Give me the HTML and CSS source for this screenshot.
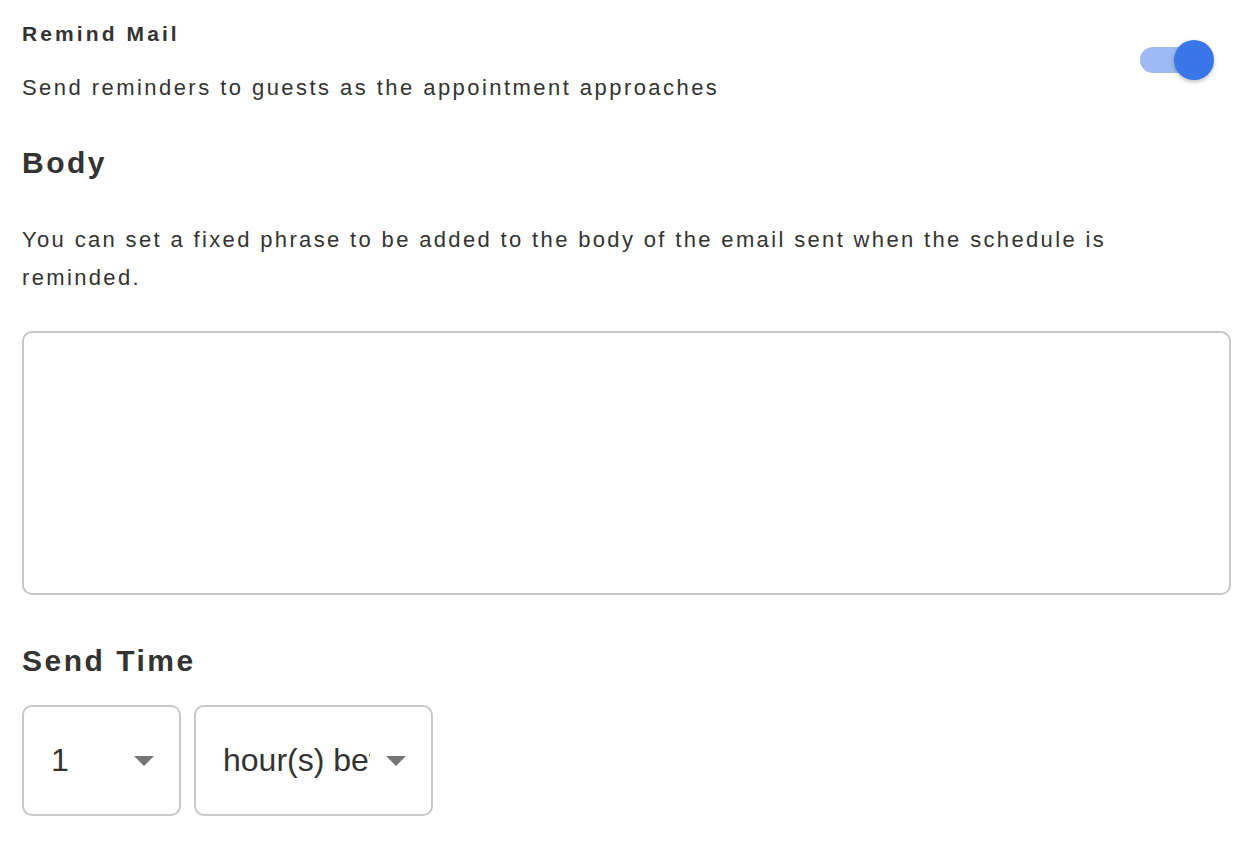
FILE: index.html
```html
<!DOCTYPE html>
<html>
<head>
<meta charset="utf-8">
<link rel="stylesheet" href="styles.css">
</head>
<body>
<div class="page">
  <div class="setting">
    <div class="setting-text">
      <div class="setting-title">Remind Mail</div>
      <div class="setting-desc">Send reminders to guests as the appointment approaches</div>
    </div>
    <div class="toggle">
      <div class="toggle-track"></div>
      <div class="toggle-thumb"></div>
    </div>
  </div>
  <h2 class="section-title">Body</h2>
  <p class="section-desc">You can set a fixed phrase to be added to the body of the email sent when the schedule is reminded.</p>
  <div class="textarea"></div>
  <h2 class="section-title send-title">Send Time</h2>
  <div class="selects">
    <div class="select select-num">
      <span class="select-value">1</span>
      <span class="caret"></span>
    </div>
    <div class="select select-unit">
      <span class="select-value">hour(s) before</span>
      <span class="caret"></span>
    </div>
  </div>
</div>
</body>
</html>
```
FILE: styles.css
```css
* { box-sizing: border-box; }
html, body { margin: 0; padding: 0; background: #fff; }
body {
  font-family: "Liberation Sans", Arial, sans-serif;
  color: #333;
}
.page {
  padding: 20px 29px 0 22px;
}
.setting {
  display: flex;
  justify-content: space-between;
  align-items: flex-start;
}
.setting-title {
  font-size: 21px;
  font-weight: bold;
  letter-spacing: 3.1px;
  line-height: 28px;
}
.setting-desc {
  margin-top: 26px;
  font-size: 22px;
  letter-spacing: 2.45px;
  line-height: 28px;
}
.toggle {
  position: relative;
  width: 75px;
  height: 40px;
  margin-top: 20px;
  margin-right: 16px;
}
.toggle-track {
  position: absolute;
  left: 0;
  top: 7px;
  width: 56px;
  height: 26px;
  border-radius: 13px;
  background: #9dbaf3;
}
.toggle-thumb {
  position: absolute;
  left: 34px;
  top: 0;
  width: 40px;
  height: 40px;
  border-radius: 50%;
  background: #3a76e8;
  box-shadow: 0 2px 4px rgba(0,0,0,0.25);
}
.section-title {
  margin: 43px 0 0;
  font-size: 30px;
  font-weight: bold;
  letter-spacing: 2.5px;
  line-height: 36px;
}
.section-desc {
  margin: 40px 0 0;
  font-size: 22px;
  letter-spacing: 2.35px;
  line-height: 38px;
}
.textarea {
  margin-top: 34px;
  height: 264px;
  border: 2px solid #c6c6c6;
  border-radius: 10px;
}
.send-title {
  margin-top: 48px;
}
.selects {
  display: flex;
  gap: 13px;
  margin-top: 26px;
}
.select {
  display: flex;
  align-items: center;
  height: 111px;
  border: 2px solid #c8c8c8;
  border-radius: 10px;
  padding: 0 25px 0 27px;
}
.select-num { width: 159px; }
.select-unit { width: 239px; }
.select-value {
  flex: 1;
  min-width: 0;
  font-size: 32px;
  color: #333;
  white-space: nowrap;
  overflow: hidden;
}
.caret {
  flex: none;
  width: 0;
  height: 0;
  border-left: 10px solid transparent;
  border-right: 10px solid transparent;
  border-top: 10px solid #757575;
  margin-left: 16px;
}
```
